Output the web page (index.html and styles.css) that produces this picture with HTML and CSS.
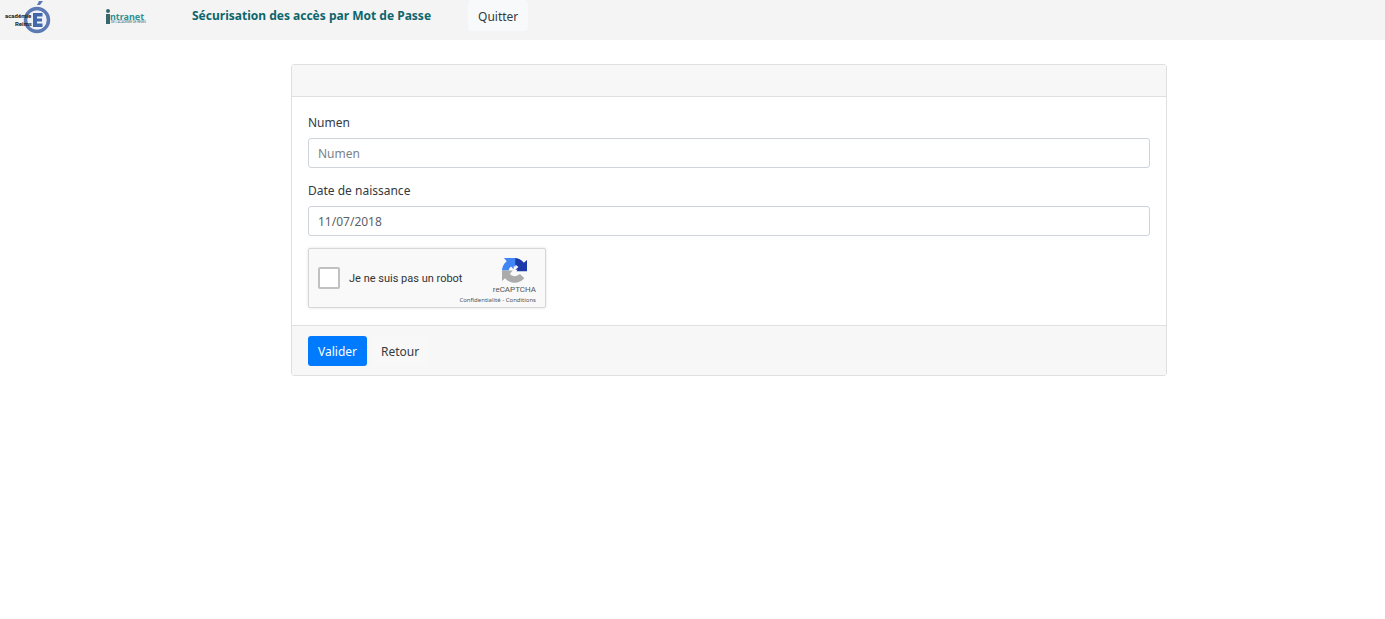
FILE: index.html
```html
<!DOCTYPE html>
<html lang="fr">
<head>
<meta charset="utf-8">
<title>Sécurisation des accès par Mot de Passe</title>
<link rel="stylesheet" href="styles.css">
</head>
<body>
<header class="navbar">
  <svg class="logo-academy" viewBox="0 0 48 36" role="img" aria-label="académie Reims">
    <circle cx="33" cy="20" r="11.5" fill="#eef2f8" stroke="#5b7ab3" stroke-width="3.5"/>
    <path d="M33 5L35 1H39L36 5Z" fill="#5b7ab3"/>
    <path d="M29 13H38.500V16.500H33V18.500H38V21.500H33V23.500H38.500V27H29Z" fill="#4168a8"/>
    <text class="logo-text" x="1" y="18">académie</text>
    <text class="logo-text" x="11" y="26">Reims</text>
  </svg>
  <svg class="logo-intranet" viewBox="0 0 42 18" role="img" aria-label="intranet">
    <circle cx="3" cy="2" r="2" fill="#38686e"/>
    <path d="M1 5H5V15H1Z" fill="#38686e"/>
    <text class="intranet-text" x="5" y="11">ntranet</text>
    <text class="intranet-sub" x="6" y="14">DE L'ACADÉMIE DE REIMS</text>
  </svg>
  <h1 class="title">Sécurisation des accès par Mot de Passe</h1>
  <button class="btn btn-light" type="button">Quitter</button>
</header>
<main class="page">
  <form class="card">
    <div class="card-header"></div>
    <div class="card-body">
      <div class="field">
        <label for="numen">Numen</label>
        <input class="control" id="numen" type="text" placeholder="Numen">
      </div>
      <div class="field">
        <label for="birth">Date de naissance</label>
        <input class="control" id="birth" type="text" value="11/07/2018">
      </div>
      <div class="captcha">
        <input class="captcha-box" id="robot" type="checkbox">
        <label class="captcha-label" for="robot">Je ne suis pas un robot</label>
        <div class="captcha-brand">
          <svg class="captcha-logo" viewBox="0 0 64 64" aria-hidden="true">
            <path d="M64 32V5L56 12A32 32 0 0 0 32 0V18Q38 18 42 23L34 30H40L37 34H64Z" fill="#1c3aa9"/>
            <path d="M32 0H5L12 8A32 32 0 0 0 0 32H17Q18 26 23 22L30 29V20L34 23V0Z" fill="#4285f4"/>
            <path d="M0 32V59L8 52A32 32 0 0 0 57 52L46 41Q38 48 29 46Q23 45 20 40L28 32Z" fill="#ababab"/>
          </svg>
          <span class="captcha-name">reCAPTCHA</span>
          <span class="captcha-links"><a href="#">Confidentialité</a> - <a href="#">Conditions</a></span>
        </div>
      </div>
    </div>
    <div class="card-footer">
      <button class="btn btn-primary" type="submit">Valider</button>
      <button class="btn btn-footer" type="button">Retour</button>
    </div>
  </form>
</main>
</body>
</html>
```
FILE: styles.css
```css
* { box-sizing: border-box; }
body {
  margin: 0;
  background: #fff;
  color: #343a40;
  font: 12px/20px "Noto Sans", "Open Sans", sans-serif;
}
.navbar {
  display: flex;
  align-items: flex-start;
  height: 40px;
  padding: 0 4px;
  background: #f4f4f4;
}
.logo-academy { width: 48px; height: 36px; }
.logo-text { font: bold 6px Roboto, sans-serif; fill: #222; }
.logo-intranet { width: 42px; height: 18px; margin: 9px 0 0 53px; }
.intranet-text { font: bold 9px "Noto Sans", sans-serif; fill: #2d9295; }
.intranet-sub { font: 3px Roboto, sans-serif; fill: #38686e; }
.title {
  margin: 6px 37px 0 45px;
  color: #0d666b;
  font-size: 12px;
  font-weight: 700;
  line-height: 20px;
}
.btn {
  height: 30px;
  padding: 2px 9px 0;
  border: 1px solid transparent;
  border-radius: 3px;
  color: #343a40;
  font: inherit;
}
.btn-light { height: 31px; background: #f8f9fa; border-color: #f8f9fa; }
.btn-footer { background: #f8f8f8; }
.btn-primary { background: #007bff; color: #fff; }
.page { padding: 24px 218px 24px 291px; }
.card { border: 1px solid #dfdfdf; border-radius: 3px; }
.card-header { height: 32px; background: #f7f7f7; border-bottom: 1px solid #dfdfdf; }
.card-body { padding: 16px 16px 17px; }
.field { margin-bottom: 12px; }
.field label { display: block; padding-bottom: 5px; }
.field + .field { padding-top: 1px; }
.control {
  display: block;
  width: 100%;
  height: 30px;
  padding: 0 9px;
  border: 1px solid #ced4da;
  border-radius: 3px;
  background: #fff;
  color: #5b6269;
  font: inherit;
}
.control::placeholder { color: #7b8288; opacity: 1; }
.captcha {
  display: flex;
  align-items: center;
  width: 238px;
  height: 60px;
  padding: 0 9px;
  border: 1px solid #d6d6d6;
  border-radius: 2px;
  background: #f9f9f9;
  box-shadow: 0 0 3px rgba(0, 0, 0, .12);
  font-family: Roboto, sans-serif;
}
.captcha-box {
  appearance: none;
  flex: none;
  width: 22px;
  height: 22px;
  margin: 0 9px 0 0;
  border: 2px solid #c1c1c1;
  border-radius: 2px;
  background: #fff;
}
.captcha-label { flex: none; padding-top: 1px; font-size: 11px; color: #333; }
.captcha-brand {
  display: flex;
  flex: 1;
  flex-direction: column;
  align-items: flex-end;
  min-width: 0;
  align-self: flex-start;
  padding-top: 9px;
  color: #555;
}
.captcha-logo { width: 25px; height: 25px; margin-right: 9px; }
.captcha-name { font-size: 8px; line-height: 14px; }
.captcha-links { font: 6px/6px "Noto Sans", sans-serif; white-space: nowrap; }
.captcha-links a { color: inherit; text-decoration: none; }
.card-footer {
  display: flex;
  gap: 4px;
  padding: 10px 16px 9px;
  border-top: 1px solid #dfdfdf;
  background: #f7f7f7;
}
```
